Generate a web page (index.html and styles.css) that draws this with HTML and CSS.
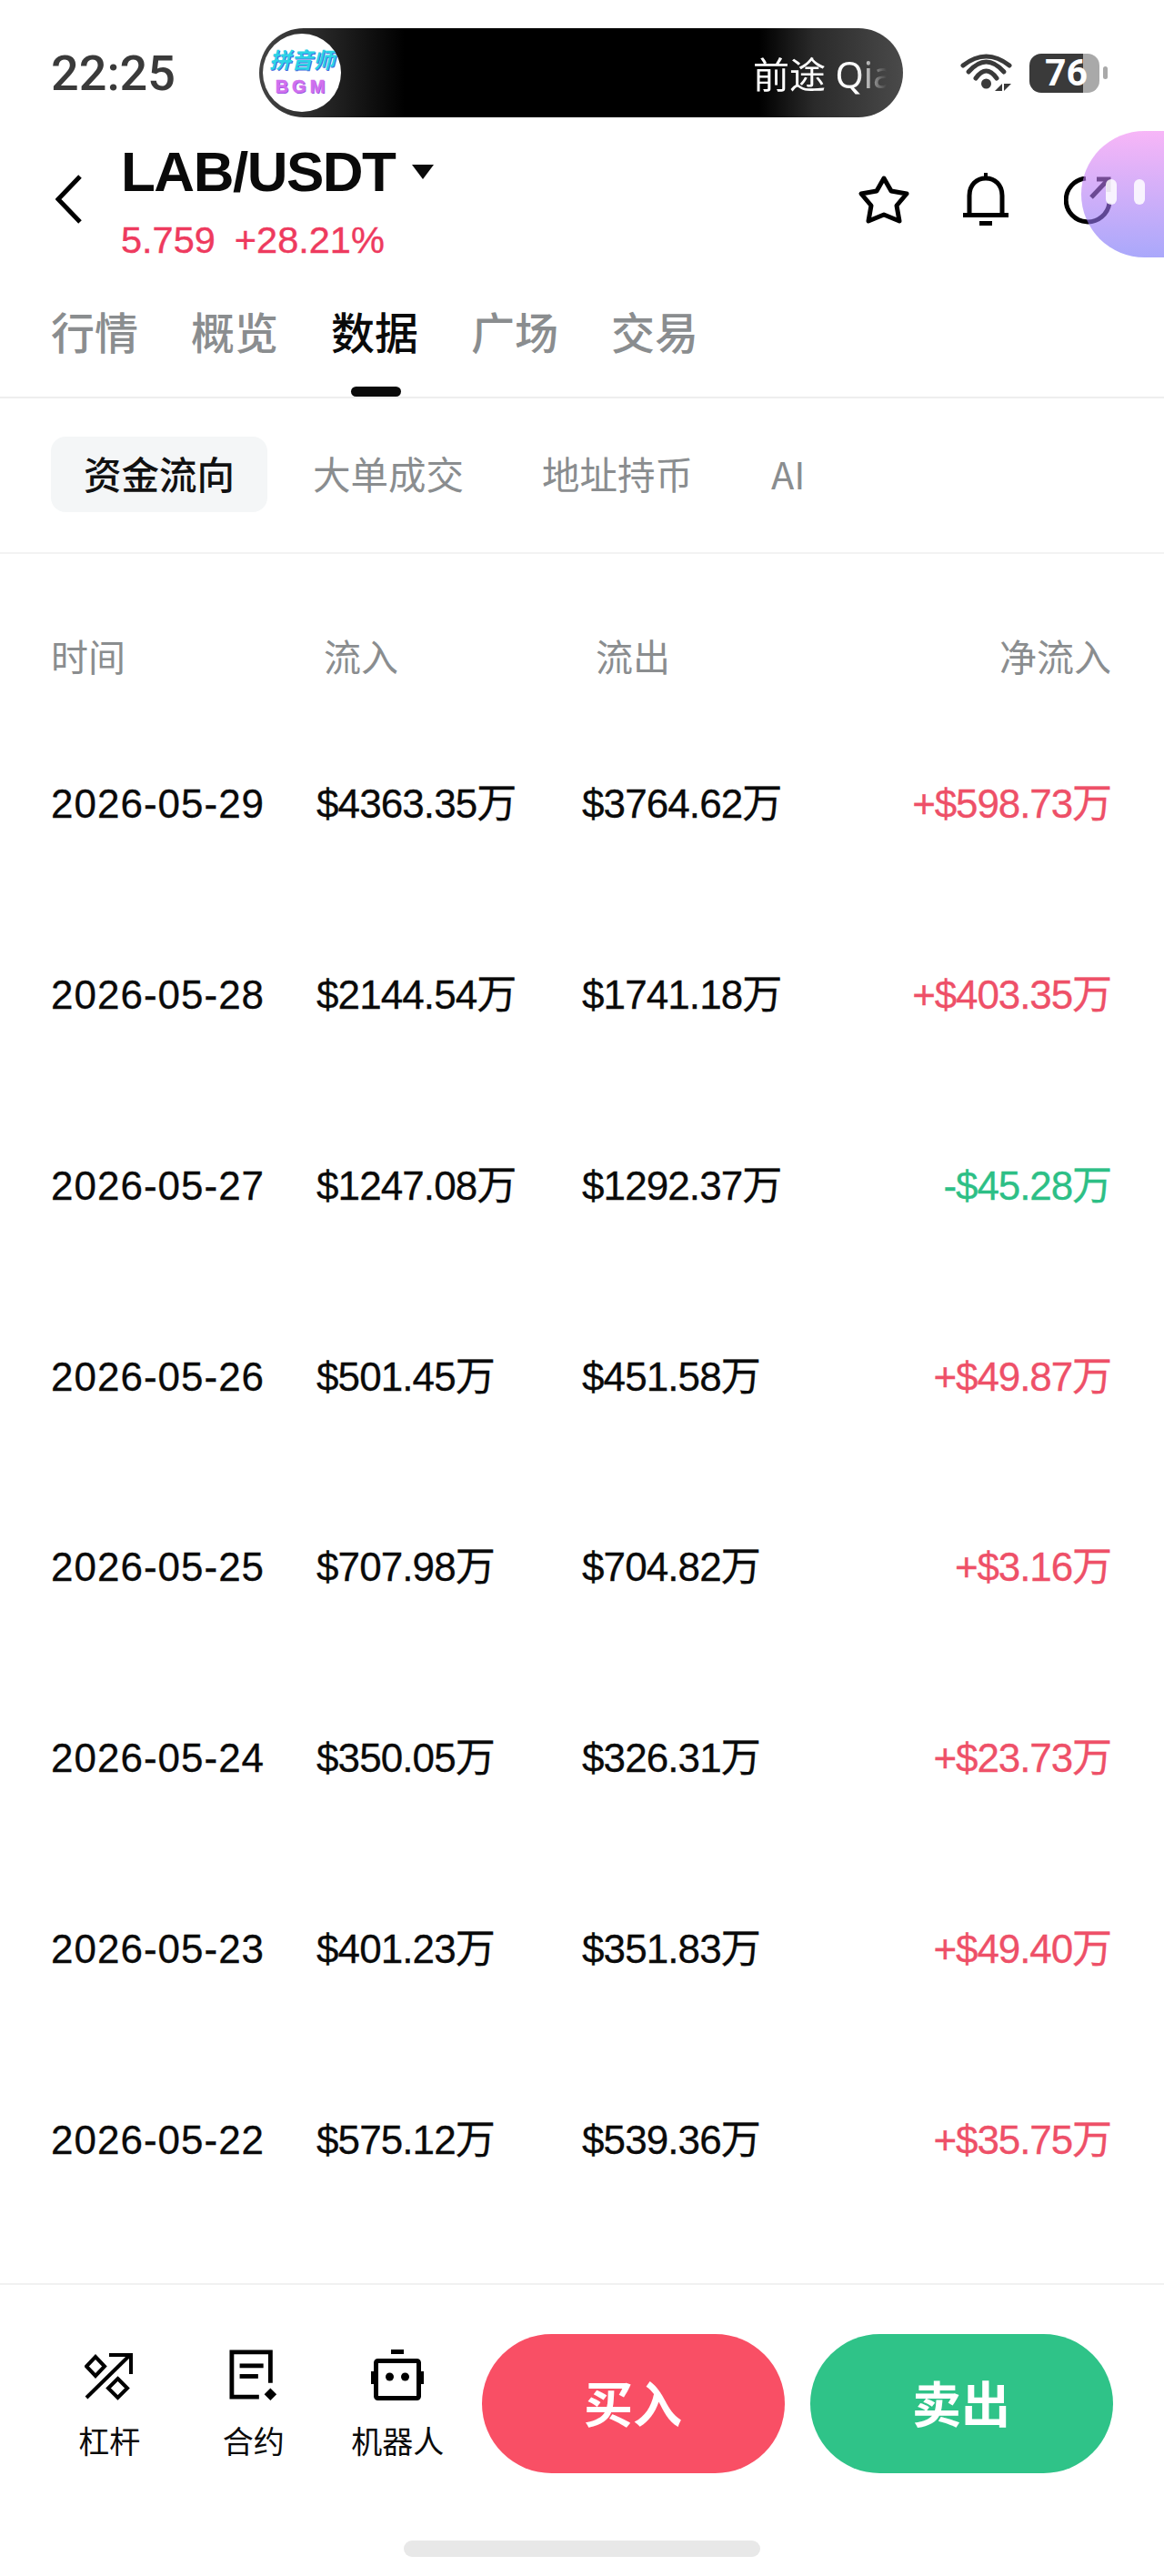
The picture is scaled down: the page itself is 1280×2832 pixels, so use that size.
FILE: index.html
```html
<!DOCTYPE html>
<html lang="zh-CN">

<head>
	<meta charset="UTF-8">
	<title>LAB/USDT</title>
	<link rel="stylesheet" href="styles.css">
</head>

<body>
	<main class="app">
		<div class="status">
			<div class="time">22:25</div>
			<div class="island">
				<div class="avatar">
					<span class="avatar_cn">拼音师</span>
					<span class="avatar_en">BGM</span>
				</div>
				<div class="island_text">前途 Qia</div>
			</div>
			<svg class="wifi" viewBox="0 0 60 46">
				<g fill="none" stroke="#3a3a3a" stroke-width="5" stroke-linecap="round">
					<path d="M3 15Q28.5 -5 54 15"/>
					<path d="M9 22Q28.5 0 48 22"/>
					<path d="M17 29Q28.5 13 40 29"/>
				</g>
				<circle cx="28.5" cy="35" r="5.5" fill="#3a3a3a"/>
				<path d="M38 43H46V35ZM48 35H56L48 43Z" fill="#3a3a3a"/>
			</svg>
			<div class="battery">76</div>
			<div class="battery_nub"></div>
		</div>

		<div class="head">
			<svg class="back" viewBox="0 0 30 54">
				<path d="M27 2L3 27L27 52" fill="none" stroke="#000" stroke-width="5"/>
			</svg>
			<div class="pair">
				<div class="pair_name">LAB/USDT<span class="caret"></span></div>
				<div class="pair_price"><span>5.759</span><span>+28.21%</span></div>
			</div>
			<svg class="star" viewBox="0 0 58 55">
				<path d="M29 4L37 18L54 21L43 34L46 51L29 44L12 51L15 34L4 21L21 18Z" fill="none" stroke="#000" stroke-width="5" stroke-linejoin="round"/>
			</svg>
			<svg class="bell" viewBox="0 0 50 58">
				<rect x="23" y="0" width="4" height="7"/>
				<path d="M7 46V25C7 13 15 6 25 6C35 6 43 13 43 25V46" fill="none" stroke="#000" stroke-width="5"/>
				<rect x="0" y="44" width="50" height="5"/>
				<rect x="18" y="53" width="14" height="5"/>
			</svg>
			<svg class="share" viewBox="0 0 54 54">
				<g fill="none" stroke="#000" stroke-width="5">
					<path d="M24 2A24 24 0 1 0 50 29"/>
					<path d="M30 23L48 4"/>
					<path d="M36 3H49V17"/>
				</g>
			</svg>
			<div class="bubble"><i></i><i></i></div>
		</div>

		<div class="tabs">
			<div class="tab">行情</div>
			<div class="tab">概览</div>
			<div class="tab active">数据</div>
			<div class="tab">广场</div>
			<div class="tab">交易</div>
		</div>

		<div class="subtabs">
			<div class="subtab active">资金流向</div>
			<div class="subtab">大单成交</div>
			<div class="subtab">地址持币</div>
			<div class="subtab">AI</div>
		</div>

		<div class="table_head">
			<div>时间</div>
			<div>流入</div>
			<div>流出</div>
			<div>净流入</div>
		</div>

		<div class="rows">
			<div class="row"><div>2026-05-29</div><div>$4363.35万</div><div>$3764.62万</div><div class="up">+$598.73万</div></div>
			<div class="row"><div>2026-05-28</div><div>$2144.54万</div><div>$1741.18万</div><div class="up">+$403.35万</div></div>
			<div class="row"><div>2026-05-27</div><div>$1247.08万</div><div>$1292.37万</div><div class="down">-$45.28万</div></div>
			<div class="row"><div>2026-05-26</div><div>$501.45万</div><div>$451.58万</div><div class="up">+$49.87万</div></div>
			<div class="row"><div>2026-05-25</div><div>$707.98万</div><div>$704.82万</div><div class="up">+$3.16万</div></div>
			<div class="row"><div>2026-05-24</div><div>$350.05万</div><div>$326.31万</div><div class="up">+$23.73万</div></div>
			<div class="row"><div>2026-05-23</div><div>$401.23万</div><div>$351.83万</div><div class="up">+$49.40万</div></div>
			<div class="row"><div>2026-05-22</div><div>$575.12万</div><div>$539.36万</div><div class="up">+$35.75万</div></div>
		</div>

		<div class="footer">
			<div class="tool">
				<svg viewBox="0 -3 54 56">
					<g fill="none" stroke="#000" stroke-width="4">
						<path d="M2 50L50 3"/>
						<path d="M27 3H51V24"/>
						<path d="M12 5L22 15.500L12 26L2 15.500Z"/>
						<path d="M36.500 29L47 39.500L36.500 50L26 39.500Z"/>
					</g>
				</svg>
				<span>杠杆</span>
			</div>
			<div class="tool">
				<svg viewBox="0 0 56 58">
					<path d="M47 38V3H3V54H34" fill="none" stroke="#000" stroke-width="5"/>
					<rect x="12" y="16" width="27" height="5"/>
					<rect x="12" y="28" width="21" height="5"/>
					<path d="M47 44L54 51L47 58L40 51Z"/>
				</svg>
				<span>合约</span>
			</div>
			<div class="tool">
				<svg viewBox="0 0 58 56">
					<rect x="22" y="0" width="14" height="5"/>
					<rect x="5.500" y="12.500" width="47" height="41" rx="2" fill="none" stroke="#000" stroke-width="5"/>
					<rect x="0" y="24" width="4" height="14"/>
					<rect x="54" y="24" width="4" height="14"/>
					<circle cx="20.500" cy="30" r="4.500"/>
					<circle cx="37.500" cy="30" r="4.500"/>
				</svg>
				<span>机器人</span>
			</div>
			<div class="btn buy">买入</div>
			<div class="btn sell">卖出</div>
		</div>

		<div class="home_bar"></div>
	</main>
</body>

</html>
```

FILE: styles.css
```css
body {
	margin: 0;
	background-color: #fff;
	font-family: "Liberation Sans", "Noto Sans CJK SC", sans-serif;
	color: #0a0a0a;
}

.app {
	position: relative;
	width: 1280px;
	height: 2832px;
	overflow: hidden;
}

/* status bar */
.status {
	display: flex;
	align-items: center;
	height: 98px;
	padding-top: 31px;
}

.time {
	width: 229px;
	padding-left: 56px;
	font-family: Roboto, sans-serif;
	font-size: 54px;
	font-weight: 500;
	color: #3a3a3a;
}

.island {
	display: flex;
	align-items: center;
	justify-content: space-between;
	width: 708px;
	height: 98px;
	border-radius: 49px;
	background: linear-gradient(90deg, #444 0, #222 80px, #000 160px, #000 550px, #2a2a2a 610px, #4a4a4a 708px);
}

.avatar {
	display: flex;
	flex-direction: column;
	align-items: center;
	justify-content: center;
	gap: 6px;
	width: 86px;
	height: 86px;
	margin-left: 4px;
	border-radius: 50%;
	background-color: #fff;
	overflow: hidden;
}

.avatar_cn {
	font-family: "Liberation Sans", "Noto Sans CJK SC", sans-serif;
	font-size: 24px;
	font-style: italic;
	font-weight: 700;
	line-height: 24px;
	color: #2bd4e6;
	text-shadow: 1px 1px 0 #4a6be0;
}

.avatar_en {
	font-family: "Liberation Sans", sans-serif;
	font-size: 20px;
	font-weight: 700;
	letter-spacing: 4px;
	line-height: 20px;
	color: #d070ee;
	text-shadow: 1px 1px 0 #9050e0;
	-webkit-text-stroke: 0.5px #d070ee;
}

.island_text {
	width: 147px;
	margin-right: 18px;
	white-space: nowrap;
	font-family: "Noto Sans", "Noto Sans CJK SC", sans-serif;
	font-size: 40px;
	color: #fff;
	-webkit-mask-image: linear-gradient(90deg, #000 78%, transparent 100%);
	mask-image: linear-gradient(90deg, #000 78%, transparent 100%);
}

.wifi {
	width: 60px;
	height: 46px;
	margin-left: 63px;
}

.battery {
	width: 60px;
	height: 43px;
	margin-left: 16px;
	padding-left: 17px;
	border-radius: 13px;
	background: linear-gradient(90deg, #3a3a3a 59px, #a9a9a9 59px);
	font-family: Roboto, sans-serif;
	font-size: 41px;
	font-weight: 700;
	line-height: 43px;
	color: #fff;
}

.battery_nub {
	width: 5px;
	height: 14px;
	margin-left: 4px;
	border-radius: 3px;
	background-color: #a9a9a9;
}

/* pair header */
.head {
	display: flex;
	height: 189px;
}

.back {
	width: 30px;
	height: 54px;
	margin: 63px 0 0 61px;
}

.pair {
	width: 810px;
	margin-left: 42px;
	padding-top: 25px;
}

.pair_name {
	display: flex;
	align-items: center;
	font-size: 62px;
	font-weight: 700;
	letter-spacing: -1.500px;
	line-height: 70px;
}

.caret {
	width: 0;
	height: 0;
	margin: 0 0 0 19px;
	border-left: 12px solid transparent;
	border-right: 12px solid transparent;
	border-top: 16px solid #0a0a0a;
}

.pair_price {
	display: flex;
	gap: 21px;
	margin-top: 17px;
	font-size: 41.500px;
	line-height: 46px;
	color: #ee3a5e;
	-webkit-text-stroke: 0.4px #ee3a5e;
}

.star {
	width: 58px;
	height: 55px;
	margin: 63px 0 0 0;
}

.bell {
	width: 50px;
	height: 58px;
	margin: 61px 0 0 58px;
}

.share {
	width: 54px;
	height: 54px;
	margin: 65px 0 0 61px;
}

.bubble {
	position: absolute;
	top: 144px;
	left: 1189px;
	width: 160px;
	height: 139px;
	border-radius: 70px;
	background: linear-gradient(180deg, rgba(242, 133, 242, 0.6), rgba(113, 110, 248, 0.6));
}

.bubble i {
	position: absolute;
	top: 53px;
	left: 27px;
	width: 12px;
	height: 28px;
	border-radius: 6px;
	background-color: rgba(255, 255, 255, 0.85);
}

.bubble i + i {
	left: 58px;
}

/* tabs */
.tabs {
	position: relative;
	display: flex;
	gap: 58px;
	height: 120px;
	padding-left: 56px;
	box-sizing: border-box;
	border-bottom: 2px solid #eeeeee;
}

.tab {
	font-family: "Noto Sans CJK SC", sans-serif;
	font-size: 48px;
	font-weight: 500;
	line-height: 90px;
	color: #8a8d8f;
}

.tab.active {
	position: relative;
	color: #0a0a0a;
}

.tab.active::after {
	content: "";
	position: absolute;
	left: 22px;
	top: 107px;
	width: 55px;
	height: 11px;
	border-radius: 6px;
	background-color: #0a0a0a;
}

.subtabs {
	display: flex;
	gap: 14px;
	height: 171px;
	padding: 42px 0 0 56px;
	box-sizing: border-box;
	border-bottom: 2px solid #f3f3f3;
}

.subtab {
	height: 83px;
	padding: 0 36px;
	border-radius: 16px;
	font-family: "Noto Sans CJK SC", sans-serif;
	font-size: 41.500px;
	line-height: 81px;
	color: #8a8d8f;
}

.subtab.active {
	background-color: #f4f6f7;
	color: #111;
	font-weight: 500;
}

/* table */
.table_head {
	display: grid;
	grid-template-columns: 300px 299px 1fr auto;
	margin-top: 87px;
	padding: 0 58px 0 56px;
	font-family: "Noto Sans CJK SC", sans-serif;
	font-size: 41px;
	line-height: 48px;
	color: #8a8d8f;
}

.rows {
	margin-top: 34px;
}

.row {
	display: grid;
	grid-template-columns: 292px 292px 1fr auto;
	align-items: baseline;
	height: 209.860px;
	padding: 81px 58px 0 56px;
	box-sizing: border-box;
	font-size: 44px;
	letter-spacing: -0.900px;
	line-height: 50px;
	color: #0a0a0a;
	-webkit-text-stroke: 0.3px currentColor;
}

.row div:first-child {
	letter-spacing: 1px;
}

.row .up,
.row .down {
	letter-spacing: -1.100px;
}

.up {
	color: #ee5068;
}

.down {
	color: #2dbf86;
}

/* bottom bar */
.footer {
	display: flex;
	margin-top: 53px;
	padding: 54px 0 0 41px;
	border-top: 2px solid #f1f1f1;
}

.tool {
	display: flex;
	flex-direction: column;
	align-items: center;
	width: 158.500px;
	padding-top: 17px;
	box-sizing: border-box;
	font-family: "Noto Sans CJK SC", sans-serif;
	font-size: 34px;
	line-height: 40px;
}

.tool svg {
	height: 56px;
	margin-bottom: 24px;
}

.btn {
	width: 333px;
	height: 153px;
	border-radius: 77px;
	font-family: "Noto Sans CJK SC", sans-serif;
	font-size: 54px;
	font-weight: 700;
	line-height: 149px;
	text-align: center;
	color: #fff;
}

.buy {
	margin-left: 13px;
	background-color: #f94f65;
}

.sell {
	margin-left: 28px;
	background-color: #2fc388;
}

.home_bar {
	width: 392px;
	height: 18px;
	margin: 74px auto 0;
	border-radius: 9px;
	background-color: #e8e8e8;
}
```
